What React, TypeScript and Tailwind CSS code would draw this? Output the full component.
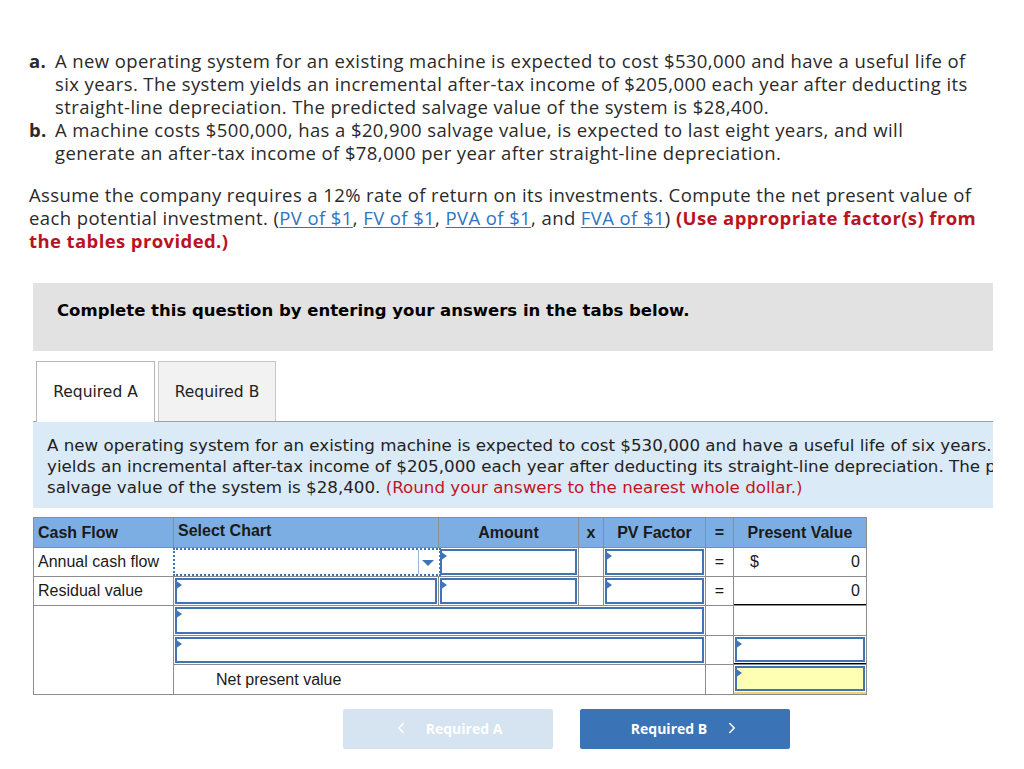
import { ChevronLeft, ChevronRight } from "lucide-react";

const proxima = { fontFamily: "'Open Sans', Lato, sans-serif" };
const verdana = { fontFamily: "Verdana, 'DejaVu Sans', sans-serif" };

function Marker() {
  return (
    <span className="absolute left-[1px] top-[3px] h-0 w-0 border-y-[5px] border-l-[7px] border-y-transparent border-l-[#3f74b8]" />
  );
}

function Field({ yellow = false }: { yellow?: boolean }) {
  return (
    <div className="relative h-full p-px">
      <div
        className={
          yellow
            ? "h-full border-2 border-[#4274b5] bg-[#ffffb3]"
            : "h-full border-2 border-[#4274b5] bg-white"
        }
      />
      <Marker />
    </div>
  );
}

function SelectChart() {
  return (
    <div className="relative -mr-[3px] -ml-px h-full border-2 border-dotted border-[#3f74b8] bg-white">
      <div className="absolute right-[20px] top-0 h-full w-px bg-[#9bb6d8]" />
      <span className="absolute right-[5px] top-[10px] h-0 w-0 border-x-[6px] border-t-[6px] border-x-transparent border-t-[#3f74b8]" />
    </div>
  );
}

function Cell({
  children,
  className = "",
}: {
  children?: React.ReactNode;
  className?: string;
}) {
  return <div className={"bg-white " + className}>{children}</div>;
}

function Link({ children }: { children: React.ReactNode }) {
  return <span className="text-[#2f74c0] underline underline-offset-2">{children}</span>;
}

export default function App() {
  return (
    <div className="min-h-[769px] w-[1024px] bg-white pt-[49px] text-[#2a2a2a]">
      <div className="pl-[29px] text-[18.5px] leading-[23px] tracking-[0.4px]" style={proxima}>
        <ol>
          <li className="flex">
            <span className="w-[26px] shrink-0 font-bold">a.</span>
            <span>
              A new operating system for an existing machine is expected to cost $530,000 and have a useful life of
              <br />
              six years. The system yields an incremental after-tax income of $205,000 each year after deducting its
              <br />
              straight-line depreciation. The predicted salvage value of the system is $28,400.
            </span>
          </li>
          <li className="flex">
            <span className="w-[26px] shrink-0 font-bold">b.</span>
            <span>
              A machine costs $500,000, has a $20,900 salvage value, is expected to last eight years, and will
              <br />
              generate an after-tax income of $78,000 per year after straight-line depreciation.
            </span>
          </li>
        </ol>
        <p className="mt-[19px]">
          Assume the company requires a 12% rate of return on its investments. Compute the net present value of
          <br />
          each potential investment. (<Link>PV of $1</Link>, <Link>FV of $1</Link>, <Link>PVA of $1</Link>, and{" "}
          <Link>FVA of $1</Link>){" "}
          <span className="font-bold text-[#b8141f]">
            (Use appropriate factor(s) from
            <br />
            the tables provided.)
          </span>
        </p>
      </div>

      <div className="ml-[33px] w-[960px]" style={verdana}>
        <div className="mt-[31px] h-[68px] bg-[#e2e2e2] pl-[24px] pt-[18px] text-[16.5px] font-bold leading-[20px] text-black">
          Complete this question by entering your answers in the tabs below.
        </div>

        <div className="mt-[10px] flex h-[61px] gap-[3px] border-b border-[#a0a0a0] pl-[3px]">
          <div className="-mb-px flex w-[119px] items-center justify-center border border-b-0 border-[#b5b5b5] bg-white pt-[2px] text-[15.5px] text-[#222]">
            Required A
          </div>
          <div className="flex w-[118px] items-center justify-center border border-b-0 border-[#c8c8c8] bg-[#f2f2f2] pt-[2px] text-[15.5px] text-[#222]">
            Required B
          </div>
        </div>

        <div className="h-[86px] overflow-hidden whitespace-nowrap bg-[#dbeaf7] pl-[14px] pt-[13px] text-[16.7px] leading-[21px] text-[#222]">
          A new operating system for an existing machine is expected to cost $530,000 and have a useful life of six years. The system
          <br />
          yields an incremental after-tax income of $205,000 each year after deducting its straight-line depreciation. The predicted
          <br />
          salvage value of the system is $28,400.{" "}
          <span className="text-[#c0141f]">(Round your answers to the nearest whole dollar.)</span>
        </div>
      </div>

      <div
        className="ml-[33px] mt-[9px] grid w-[834px] grid-cols-[139px_264px_139px_24px_101px_27px_132px] grid-rows-[29px_28px_28px_29px_28px_29px] gap-px border border-[#8c8c8c] bg-[#8c8c8c] text-[16px] text-[#1a1a1a]"
        style={{ fontFamily: "'Liberation Sans', Arial, sans-serif" }}
      >
        <div className="flex items-center bg-[#7caee3] pl-[4px] font-bold">Cash Flow</div>
        <div className="flex items-center bg-[#7caee3] pb-[3px] pl-[4px] font-bold">Select Chart</div>
        <div className="flex items-center justify-center bg-[#7caee3] font-bold">Amount</div>
        <div className="flex items-center justify-center bg-[#7caee3] font-bold">x</div>
        <div className="flex items-center justify-center bg-[#7caee3] font-bold">PV Factor</div>
        <div className="flex items-center justify-center bg-[#7caee3] font-bold">=</div>
        <div className="flex items-center justify-center bg-[#7caee3] font-bold">Present Value</div>

        <Cell className="flex items-center pl-[4px]">Annual cash flow</Cell>
        <Cell>
          <SelectChart />
        </Cell>
        <Cell>
          <Field />
        </Cell>
        <Cell />
        <Cell>
          <Field />
        </Cell>
        <Cell className="flex items-center justify-center">=</Cell>
        <Cell className="flex items-center justify-between pl-[16px] pr-[6px]">
          <span>$</span>
          <span>0</span>
        </Cell>

        <Cell className="flex items-center pl-[4px]">Residual value</Cell>
        <Cell>
          <Field />
        </Cell>
        <Cell>
          <Field />
        </Cell>
        <Cell />
        <Cell>
          <Field />
        </Cell>
        <Cell className="flex items-center justify-center">=</Cell>
        <Cell className="flex items-center justify-end border-b border-black pr-[6px]">0</Cell>

        <Cell className="row-span-3" />
        <Cell className="col-span-4">
          <Field />
        </Cell>
        <Cell />
        <Cell />

        <Cell className="col-span-4">
          <Field />
        </Cell>
        <Cell />
        <Cell className="border-b border-black">
          <Field />
        </Cell>

        <Cell className="col-span-4 flex items-center pl-[42px]">Net present value</Cell>
        <Cell />
        <Cell className="border-b-2 border-[#e8d870]">
          <Field yellow />
        </Cell>
      </div>

      <div className="ml-[343px] mt-[14px] flex gap-[27px] text-[14px] font-bold text-white" style={proxima}>
        <button className="flex h-[40px] w-[210px] items-center justify-center gap-[16px] rounded-[2px] bg-[#d6e3f1] pb-[2px] pr-[2px]">
          <ChevronLeft size={18} strokeWidth={2} />
          Required A
        </button>
        <button className="flex h-[40px] w-[210px] items-center justify-center gap-[16px] rounded-[2px] bg-[#3b74b6] pb-[2px] pl-[2px]">
          Required B
          <ChevronRight size={18} strokeWidth={2} />
        </button>
      </div>
    </div>
  );
}
